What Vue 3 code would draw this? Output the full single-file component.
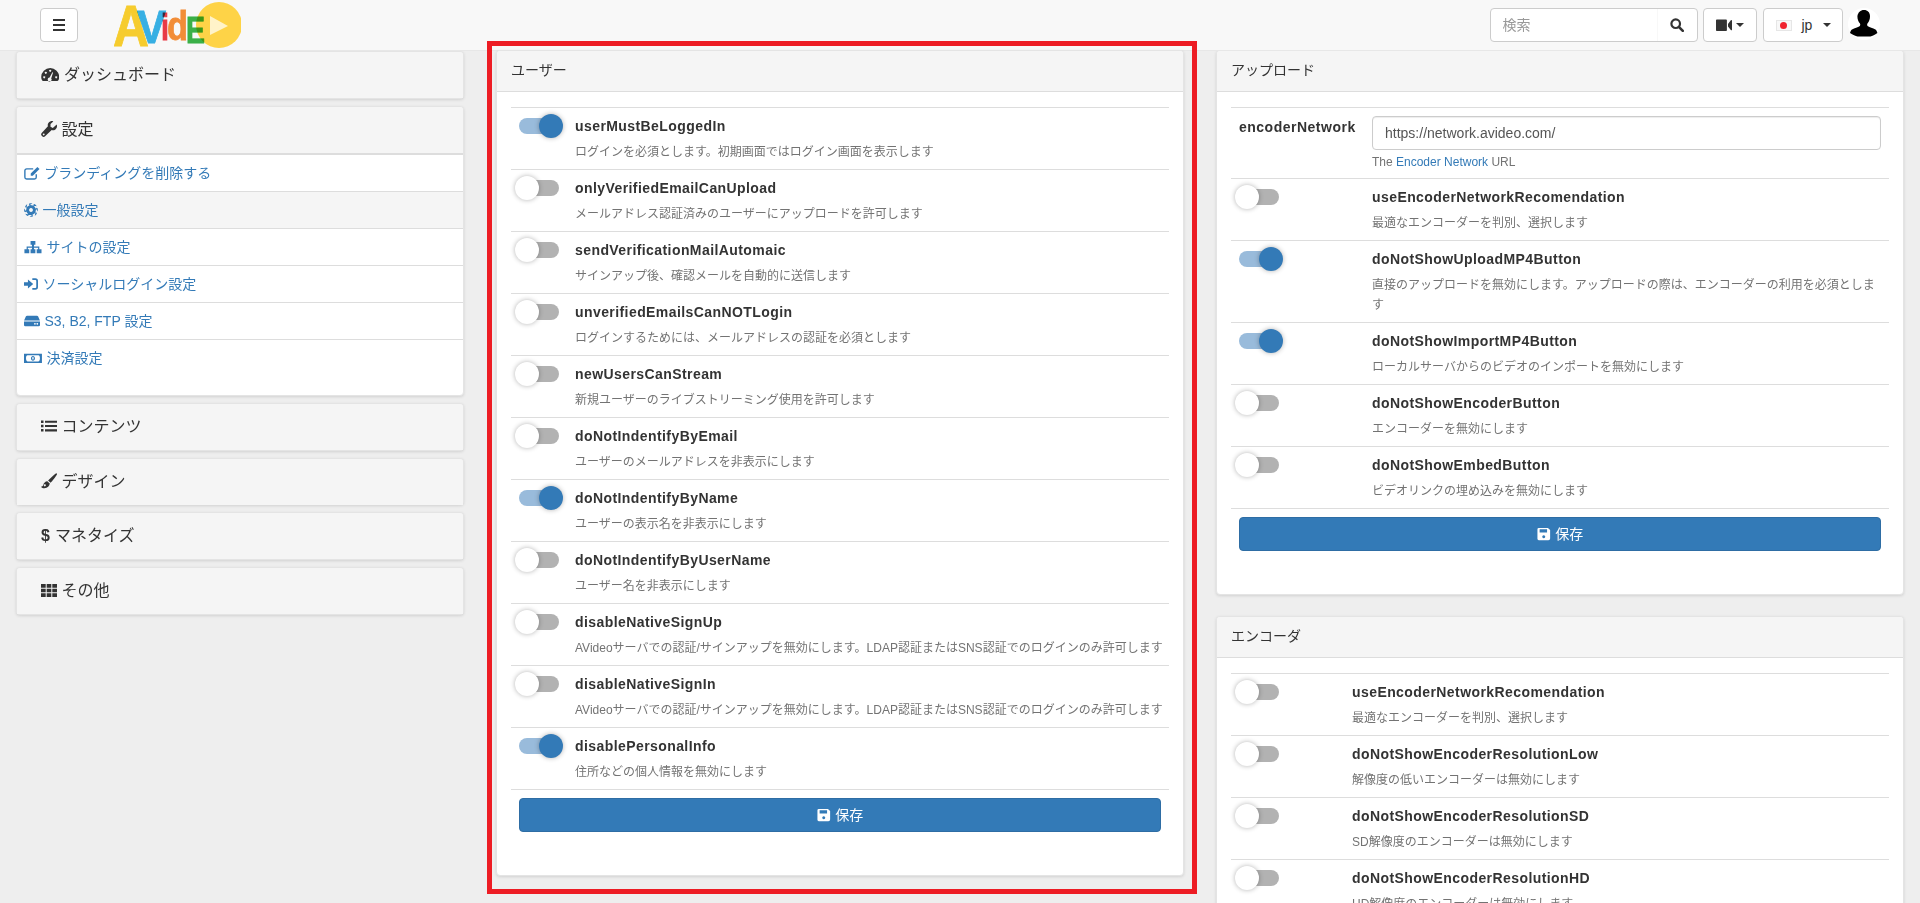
<script setup>
// gear outline for the cog icon, 8 teeth around (8,8)
function gearPath() {
  let d = ''
  for (let i = 0; i < 8; i++) {
    const a = (i * Math.PI) / 4
    const pts = [[-1.7, 7.8], [1.7, 7.8], [2.5, 6]]
    pts.forEach(([x, y], j) => {
      const px = 8 + x * Math.cos(a) - y * Math.sin(a)
      const py = 8 + x * Math.sin(a) + y * Math.cos(a)
      d += (i === 0 && j === 0 ? 'M' : 'L') + px.toFixed(2) + ' ' + py.toFixed(2)
    })
  }
  return d + 'zM8 5.8a2.200 2.200 0 1 0 .01 0z'
}

const icons = {
  dashboard: { w: 18.4, d: 'M9.2 2a9 9 0 0 0-9 9c0 1.4.4 2.6 1 3.6.2.3.5.4.8.4h14.4c.3 0 .6-.1.8-.4.6-1 1-2.2 1-3.6a9 9 0 0 0-9-9zM9.2 3.800a1 1 0 1 0 .01 0zM4.800 5.800a1 1 0 1 0 .01 0zM3.200 10.200a1 1 0 1 0 .01 0zM15.200 10.200a1 1 0 1 0 .01 0zM11.400 6.200l-2.800 5.400a1.900 1.900 0 1 0 1.600.8l1.900-5.900z' },
  wrench: { w: 16, d: 'M15.7 3.6c.4 1 .4 2.1 0 3.1-.8 2-3 3-5 2.4l-6.6 6.2c-.8.8-2.1.8-2.9 0l-.5-.5c-.8-.8-.8-2.1 0-2.9l6.2-6.6C6.300 3.300 7.300 1.100 9.300.4c1-.4 2-.4 3 0L9.500 3.100v2.700l2.300 1.200 3.900-3.400zM2.700 12.500a.9.9 0 1 0 .01 0z' },
  list: { w: 16, d: 'M0 2.500h2.500V5H0zM4 2.700h12v2.100H4zM0 6.800h2.500v2.500H0zM4 7h12v2.100H4zM0 11.100h2.500v2.500H0zM4 11.300h12v2.100H4z' },
  brush: { w: 16, d: 'M14.800.5c.7-.5 1.500.3 1.100 1-1.200 2.200-4.700 6.800-6.300 8.300L7.100 7.600C8.700 5.800 12.600 2 14.800.5zM6.300 8.300l2.500 2.200c-.3 2.600-2.200 4.700-5.400 4.700-1.400 0-2.600-.5-3.400-1.500 1.300 0 1.800-.6 2.200-1.700.6-2.100 2.100-3.500 4.100-3.700zM3.800 11.300a1 1 0 1 0 .01 0z' },
  th: { w: 16, d: 'M0 2h4.700v3.700H0zM5.700 2h4.600v3.700H5.700zM11.300 2H16v3.700h-4.700zM0 6.700h4.700v3.600H0zM5.700 6.700h4.600v3.600H5.700zM11.300 6.700H16v3.600h-4.700zM0 11.300h4.700V15H0zM5.700 11.300h4.600V15H5.700zM11.300 11.300H16V15h-4.700z' },
  edit: { w: 18, s: 'M14 9.500v3.300a2 2 0 0 1-2 2H3a2 2 0 0 1-2-2V5.300a2 2 0 0 1 2-2h7.500', d: 'M15.300 1l2.400 2.400-7.600 7.600H7.700V8.600z' },
  cog: { w: 16, d: gearPath() },
  sitemap: { w: 20.5, d: 'M7.500 1h5.500v4.500h-1.600v2h6.100v3h2.500V15h-5.500v-4.500h1.600V8.900h-4.700v1.600h1.600V15H7.500v-4.500h1.600V8.900H4.400v1.600H6V15H.5v-4.500H3v-3h6.100v-2H7.500z' },
  signin: { w: 16, d: 'M0 6h4.500V2.800L10.500 8l-6 5.200V10H0zM9.500 1.500h3.500a3 3 0 0 1 3 3v7a3 3 0 0 1-3 3H9.500v-2H13a1 1 0 0 0 1-1v-7a1 1 0 0 0-1-1H9.500z' },
  hdd: { w: 18.300, d: 'M3.500 2h11.300c.6 0 1.100.3 1.400.8l2 4.700H.1l2-4.700c.3-.5.8-.8 1.400-.8zM0 8.500h18.300v4a1.500 1.500 0 0 1-1.500 1.500H1.500A1.500 1.500 0 0 1 0 12.500zM12.500 10.300a.9.9 0 1 0 .01 0zM15.200 10.300a.9.9 0 1 0 .01 0z' },
  money: { w: 20.500, d: 'M0 3h20.500v10.800H0zM2.300 8.400c0-2.200.7-3.500 1.700-3.500h12.500c1 0 1.700 1.300 1.700 3.500s-.7 3.500-1.700 3.500H4c-1 0-1.700-1.300-1.700-3.500zM10.250 5.600c-1.400 0-2.300 1.200-2.300 2.800s.9 2.800 2.300 2.800 2.300-1.200 2.300-2.800-.9-2.800-2.300-2.800zM10.250 6.900c.5 0 .8.600.8 1.500s-.3 1.500-.8 1.500-.8-.6-.8-1.500.3-1.500.8-1.500z' },
  save: { w: 16, d: 'M2 1h10.500L15 3.500V13a2 2 0 0 1-2 2H2a1.500 1.500 0 0 1-1.500-1.500v-11A1.500 1.500 0 0 1 2 1zM3 2.500v3.700h8.500V2.500zM7.700 9.500a1.700 1.700 0 1 0 .01 0z' },
  video: { w: 16, d: 'M.8 1.500h9.300c.5 0 .8.300.8.800v9.900c0 .5-.3.800-.8.800H.8c-.5 0-.8-.3-.8-.8V2.300c0-.5.3-.8.800-.8zM12 6l2.800-3.700c.4-.4 1.200-.2 1.200.4v9c0 .6-.8.800-1.200.4L12 8.500z' }
}

const sideTop = [{ icon: 'dashboard', label: 'ダッシュボード' }]
const settingsLinks = [
  { icon: 'edit', label: 'ブランディングを削除する' },
  { icon: 'cog', label: '一般設定', active: true },
  { icon: 'sitemap', label: 'サイトの設定' },
  { icon: 'signin', label: 'ソーシャルログイン設定' },
  { icon: 'hdd', label: 'S3, B2, FTP 設定' },
  { icon: 'money', label: '決済設定' }
]
const sideBottom = [
  { icon: 'list', label: 'コンテンツ' },
  { icon: 'brush', label: 'デザイン' },
  { glyph: '$', label: 'マネタイズ' },
  { icon: 'th', label: 'その他' }
]

const userRows = [
  { name: 'userMustBeLoggedIn', on: true, text: 'ログインを必須とします。初期画面ではログイン画面を表示します' },
  { name: 'onlyVerifiedEmailCanUpload', text: 'メールアドレス認証済みのユーザーにアップロードを許可します' },
  { name: 'sendVerificationMailAutomaic', text: 'サインアップ後、確認メールを自動的に送信します' },
  { name: 'unverifiedEmailsCanNOTLogin', text: 'ログインするためには、メールアドレスの認証を必須とします' },
  { name: 'newUsersCanStream', text: '新規ユーザーのライブストリーミング使用を許可します' },
  { name: 'doNotIndentifyByEmail', text: 'ユーザーのメールアドレスを非表示にします' },
  { name: 'doNotIndentifyByName', on: true, text: 'ユーザーの表示名を非表示にします' },
  { name: 'doNotIndentifyByUserName', text: 'ユーザー名を非表示にします' },
  { name: 'disableNativeSignUp', text: 'AVideoサーバでの認証/サインアップを無効にします。LDAP認証またはSNS認証でのログインのみ許可します' },
  { name: 'disableNativeSignIn', text: 'AVideoサーバでの認証/サインアップを無効にします。LDAP認証またはSNS認証でのログインのみ許可します' },
  { name: 'disablePersonalInfo', on: true, text: '住所などの個人情報を無効にします' }
]
const uploadRows = [
  { name: 'useEncoderNetworkRecomendation', text: '最適なエンコーダーを判別、選択します' },
  { name: 'doNotShowUploadMP4Button', on: true, text: '直接のアップロードを無効にします。アップロードの際は、エンコーダーの利用を必須とします' },
  { name: 'doNotShowImportMP4Button', on: true, text: 'ローカルサーバからのビデオのインポートを無効にします' },
  { name: 'doNotShowEncoderButton', text: 'エンコーダーを無効にします' },
  { name: 'doNotShowEmbedButton', text: 'ビデオリンクの埋め込みを無効にします' }
]
const encoderRows = [
  { name: 'useEncoderNetworkRecomendation', text: '最適なエンコーダーを判別、選択します' },
  { name: 'doNotShowEncoderResolutionLow', text: '解像度の低いエンコーダーは無効にします' },
  { name: 'doNotShowEncoderResolutionSD', text: 'SD解像度のエンコーダーは無効にします' },
  { name: 'doNotShowEncoderResolutionHD', text: 'HD解像度のエンコーダーは無効にします' }
]
const sections = [
  { key: 'upload', title: 'アップロード', rows: uploadRows, cls: 'col-141', network: true, save: true },
  { key: 'encoder', title: 'エンコーダ', rows: encoderRows, cls: 'col-121', save: false }
]
</script>

<template>
  <div class="page">
    <nav class="navbar">
      <div class="nav-left">
        <button class="nav-btn burger" aria-label="menu"><span></span><span></span><span></span></button>
        <svg class="logo" viewBox="0 0 127 46" width="127" height="46">
          <circle cx="105" cy="23" r="23" fill="#fed347" />
          <polygon points="96,14 114,24 96,33" fill="#fff3c9" />
          <text class="l" x="-1" y="44" font-size="57" textLength="36" lengthAdjust="spacingAndGlyphs" fill="#fdd22f" stroke="#fdd22f">A</text>
          <text class="l" x="23" y="41" font-size="46" textLength="29" lengthAdjust="spacingAndGlyphs" fill="#38b4ea" stroke="#38b4ea">V</text>
          <text class="l" x="47" y="38" font-size="36" textLength="8" lengthAdjust="spacingAndGlyphs" fill="#ef3b47" stroke="#ef3b47">i</text>
          <text class="l" x="53" y="38" font-size="40" textLength="21" lengthAdjust="spacingAndGlyphs" fill="#f99138" stroke="#f99138">d</text>
          <text class="l" x="72" y="41" font-size="36" textLength="19" lengthAdjust="spacingAndGlyphs" fill="#3cb54a" stroke="#3cb54a">E</text>
        </svg>
      </div>
      <div class="nav-right">
        <div class="search">
          <input type="text" placeholder="検索" />
          <span class="search-btn">
            <svg viewBox="0 0 14 14" width="14" height="14"><circle cx="5.700" cy="5.700" r="4.300" fill="none" stroke="#333" stroke-width="2.200" /><path d="M8.800 8.800L12.800 12.800" stroke="#333" stroke-width="2.600" stroke-linecap="round" /></svg>
          </span>
        </div>
        <div class="nav-btn video">
          <svg :viewBox="`0 0 ${icons.video.w} 15`" width="16" height="15"><path :d="icons.video.d" fill="#333" /></svg>
          <i class="caret"></i>
        </div>
        <div class="nav-btn lang">
          <span class="flag"><b></b></span>
          <span class="lang-code">jp</span>
          <i class="caret"></i>
        </div>
        <svg class="avatar" viewBox="0 0 32 32" width="32" height="32">
          <circle cx="16" cy="16" r="16" fill="#fff" />
          <path d="M16 2c3.600 0 6 2.400 6 6.200 0 3-1 5.400-2.400 7-.7.800-.6 2.400.3 3 1.500 1 5 1.700 7.500 3.200 1 .6 1.600 2 2 3.600-2.500 2-5 3-7 3.500H9.500c-2-.5-4.700-1.500-7.500-3.500.4-1.600 1-3 2-3.600 2.500-1.500 6-2.200 7.500-3.200.9-.6 1-2.200.3-3-1.400-1.600-2.400-4-2.400-7C10 4.400 12.400 2 16 2z" fill="#000" />
        </svg>
      </div>
    </nav>

    <div class="layout">
      <aside class="sidebar">
        <div v-for="item in sideTop" :key="item.label" class="panel side-panel">
          <div class="side-heading">
            <svg class="ico" :viewBox="`0 0 ${icons[item.icon].w} 16`" :style="{ width: icons[item.icon].w + 'px' }"><path :d="icons[item.icon].d" fill="#333" fill-rule="evenodd" /></svg>{{ item.label }}
          </div>
        </div>

        <div class="panel settings-panel">
          <div class="side-heading open">
            <svg class="ico" viewBox="0 0 16 16" style="width: 16px"><path :d="icons.wrench.d" fill="#333" fill-rule="evenodd" /></svg>設定
          </div>
          <a v-for="link in settingsLinks" :key="link.label" class="side-link" :class="{ active: link.active }">
            <svg class="ico" :viewBox="`0 0 ${icons[link.icon].w} 16`" :style="{ width: (icons[link.icon].w * 14 / 16) + 'px' }">
              <path v-if="icons[link.icon].s" :d="icons[link.icon].s" fill="none" stroke="#337ab7" stroke-width="1.600" />
              <path :d="icons[link.icon].d" fill="#337ab7" fill-rule="evenodd" />
            </svg>{{ link.label }}
          </a>
        </div>

        <div v-for="item in sideBottom" :key="item.label" class="panel side-panel">
          <div class="side-heading">
            <span v-if="item.glyph" class="glyph">{{ item.glyph }}</span>
            <svg v-else class="ico" :viewBox="`0 0 ${icons[item.icon].w} 16`" :style="{ width: icons[item.icon].w + 'px' }"><path :d="icons[item.icon].d" fill="#333" fill-rule="evenodd" /></svg>{{ item.label }}
          </div>
        </div>
      </aside>

      <section class="column">
        <div class="panel option-panel highlighted">
          <div class="panel-heading">ユーザー</div>
          <div class="panel-body col-64">
            <div v-for="row in userRows" :key="row.name" class="row">
              <div class="switch-col"><span class="switch" :class="{ on: row.on }"></span></div>
              <div class="row-text">
                <div class="row-title">{{ row.name }}</div>
                <div class="row-desc">{{ row.text }}</div>
              </div>
            </div>
            <div class="row-end"></div>
            <button class="save-btn">
              <svg class="ico" viewBox="0 0 16 16" style="width: 14px"><path :d="icons.save.d" fill="#fff" fill-rule="evenodd" /></svg>保存
            </button>
          </div>
        </div>
      </section>

      <section class="column">
        <div v-for="sec in sections" :key="sec.key" class="panel option-panel">
          <div class="panel-heading">{{ sec.title }}</div>
          <div class="panel-body" :class="sec.cls">
            <div v-if="sec.network" class="row network">
              <label class="switch-col net-label">encoderNetwork</label>
              <div class="row-text">
                <input class="net-input" type="text" value="https://network.avideo.com/" />
                <div class="net-help">The <a>Encoder Network</a> URL</div>
              </div>
            </div>
            <div v-for="row in sec.rows" :key="row.name" class="row">
              <div class="switch-col"><span class="switch" :class="{ on: row.on }"></span></div>
              <div class="row-text">
                <div class="row-title">{{ row.name }}</div>
                <div class="row-desc">{{ row.text }}</div>
              </div>
            </div>
            <div class="row-end"></div>
            <button v-if="sec.save" class="save-btn">
              <svg class="ico" viewBox="0 0 16 16" style="width: 14px"><path :d="icons.save.d" fill="#fff" fill-rule="evenodd" /></svg>保存
            </button>
          </div>
        </div>
      </section>
    </div>
  </div>
</template>

<style>
html,
body {
  margin: 0;
  height: 100%;
  overflow: hidden;
  background: #eee;
}
</style>

<style scoped>
.page {
  height: 903px;
  overflow: hidden;
  background: #eee;
  font-family: "Liberation Sans", "Noto Sans CJK JP", sans-serif;
  font-size: 14px;
  line-height: 20px;
  color: #333;
}

.navbar {
  height: 50px;
  box-sizing: content-box;
  border-bottom: 1px solid #e7e7e7;
  background: #f8f8f8;
  display: flex;
  align-items: center;
  justify-content: space-between;
  padding: 0 40px;
  position: relative;
}

.nav-left,
.nav-right {
  display: flex;
  align-items: center;
}

.nav-left {
  gap: 36px;
}

.nav-right {
  gap: 5.500px;
}

.nav-btn {
  height: 34px;
  box-sizing: border-box;
  border: 1px solid #ccc;
  border-radius: 4px;
  background: #fff;
  display: flex;
  align-items: center;
}

.burger {
  width: 38px;
  flex-direction: column;
  justify-content: center;
  gap: 2.500px;
  padding: 0;
}

.burger span {
  display: block;
  width: 12.500px;
  height: 2.200px;
  background: #333;
}

.l {
  font-family: "Liberation Sans", sans-serif;
  font-weight: 700;
  stroke-width: 0.8px;
  mix-blend-mode: multiply;
}

.search {
  width: 208px;
  height: 34px;
  box-sizing: border-box;
  display: flex;
  border: 1px solid #ccc;
  border-radius: 4px;
  background: #fff;
}

.search input {
  flex: 1;
  min-width: 0;
  border: 0;
  outline: 0;
  padding: 0 12px;
  background: transparent;
  font: inherit;
  color: #555;
}

.search input::placeholder {
  color: #999;
}

.search-btn {
  width: 40px;
  display: flex;
  align-items: center;
  justify-content: center;
  border-left: 1px solid #f8f8f8;
  box-sizing: border-box;
}

.video {
  width: 54px;
  padding-left: 12px;
  box-sizing: border-box;
  gap: 4px;
}

.lang {
  width: 80px;
  padding-left: 12px;
  box-sizing: border-box;
}

.caret {
  width: 0;
  height: 0;
  border-top: 4px solid #333;
  border-left: 4px solid transparent;
  border-right: 4px solid transparent;
}

.flag {
  width: 16px;
  height: 11px;
  box-sizing: border-box;
  background: #f8f8f8;
  border: 1px solid #e6e6e6;
  display: flex;
  align-items: center;
  justify-content: center;
}

.flag b {
  width: 7px;
  height: 7px;
  border-radius: 50%;
  background: #f0232f;
}

.lang-code {
  margin: 0 11px 0 10px;
}

.avatar {
  margin-top: -2px;
}

.layout {
  display: grid;
  grid-template-columns: 448px 688px 688px;
  gap: 32px;
  padding: 0 16px;
  align-items: start;
}

.panel {
  box-sizing: border-box;
  background: #fff;
  border: 1px solid #e4e4e4;
  border-radius: 4px;
  box-shadow: 0 1px 3px rgba(0, 0, 0, 0.12);
}

.sidebar {
  display: flex;
  flex-direction: column;
  gap: 7px;
  padding-top: 0.330px;
}

.side-panel {
  height: 47.670px;
  background: #f5f5f5;
}

.side-heading {
  font-size: 16px;
  padding: 13px 24px;
  line-height: 20px;
  background: #f5f5f5;
  border-radius: 3px 3px 0 0;
  white-space: nowrap;
}

.side-heading.open {
  height: 48px;
  box-sizing: border-box;
  border-bottom: 2px solid #ddd;
}

.glyph {
  display: inline-block;
  font-weight: 700;
  margin-right: 5px;
}

.ico {
  height: 1em;
  margin-right: 4.500px;
  vertical-align: -2px;
}

.settings-panel {
  height: 290px;
}

.side-link {
  display: block;
  height: 37px;
  box-sizing: border-box;
  padding: 8px 7px;
  border-bottom: 1px solid #ddd;
  color: #337ab7;
  white-space: nowrap;
}

.side-link:last-child {
  border-bottom: 0;
}

.side-link.active {
  background: #f5f5f5;
}

.column {
  margin-top: -1px;
  display: flex;
  flex-direction: column;
  gap: 21px;
}

.highlighted {
  position: relative;
}

.highlighted::after {
  content: "";
  position: absolute;
  left: -10px;
  right: -14px;
  top: -10px;
  bottom: -19px;
  border: 5px solid #ed1c24;
  pointer-events: none;
}

.panel-heading {
  height: 41px;
  box-sizing: border-box;
  padding: 9px 14px 11px;
  background: #f5f5f5;
  border-bottom: 1px solid #ddd;
  border-radius: 3px 3px 0 0;
}

.panel-body {
  padding: 15px 14px 43px;
}

.row {
  display: flex;
  border-top: 1px solid #ddd;
  padding: 8px 8px 7px;
}

.row-end {
  border-top: 1px solid #ddd;
}

.switch-col {
  flex: none;
  box-sizing: border-box;
  padding-top: 1px;
}

.col-64 .switch-col {
  width: 56px;
}

.col-64 .row-desc {
  white-space: nowrap;
}

.col-141 .switch-col {
  width: 133px;
}

.col-121 .switch-col {
  width: 113px;
}

.switch {
  display: block;
  position: relative;
  width: 40px;
  height: 16px;
  margin-top: 1px;
  border-radius: 8px;
  background: #b2b2b2;
}

.switch::after {
  content: "";
  position: absolute;
  left: -4px;
  top: -4px;
  width: 24px;
  height: 24px;
  border-radius: 50%;
  background: #fff;
  box-shadow: 0 0 5px rgba(0, 0, 0, 0.3);
}

.switch.on {
  background: #99bbdb;
}

.switch.on::after {
  left: 20px;
  background: #337ab7;
}

.row-text {
  flex: 1;
  min-width: 0;
}

.row-title {
  font-weight: 700;
  letter-spacing: 0.42px;
}

.row-desc {
  margin-top: 6px;
  font-size: 12px;
  line-height: 20px;
  color: #737373;
}

.network {
  padding: 8px 8px 7px;
}

.net-label {
  font-weight: 700;
  letter-spacing: 0.5px;
  padding-top: 1px;
}

.net-input {
  display: block;
  width: 100%;
  height: 34px;
  box-sizing: border-box;
  padding: 6px 12px;
  border: 1px solid #ccc;
  border-radius: 4px;
  font: inherit;
  color: #555;
  box-shadow: inset 0 1px 1px rgba(0, 0, 0, 0.075);
}

.net-help {
  margin-top: 4px;
  font-size: 12px;
  line-height: 17px;
  color: #737373;
}

.net-help a {
  color: #337ab7;
}

.save-btn {
  display: block;
  width: calc(100% - 16px);
  height: 34px;
  margin: 8px 8px 0;
  border: 1px solid #2e6da4;
  border-radius: 4px;
  background: #337ab7;
  color: #fff;
  font: inherit;
}
</style>
